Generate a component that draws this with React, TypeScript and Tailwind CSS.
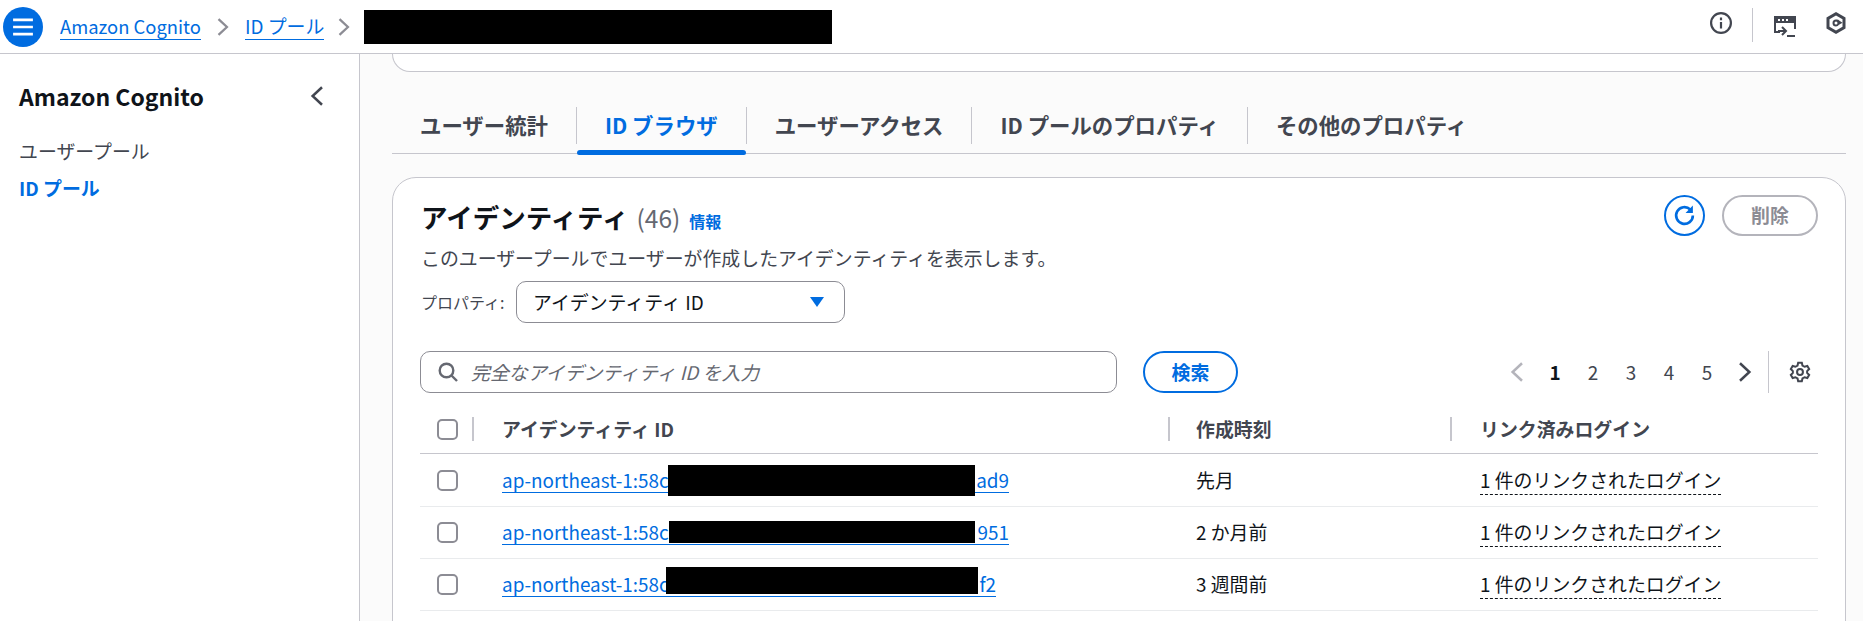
const rows = [
  { suffix: "ad9", time: "先月", height: "h-[53px]", linkWidth: "w-[507px]", mask: "left-[166px] w-[307px] top-[-3px] h-[31px]" },
  { suffix: "951", time: "2 か月前", height: "h-[52px]", linkWidth: "w-[507px]", mask: "left-[167px] w-[306px] top-[1px] h-[22px]" },
  { suffix: "f2", time: "3 週間前", height: "h-[52px]", linkWidth: "w-[494px]", mask: "left-[164px] w-[312px] top-[-5px] h-[27px]" },
];

const tabs = ["ユーザー統計", "ID ブラウザ", "ユーザーアクセス", "ID プールのプロパティ", "その他のプロパティ"];

function Chevron({ dir, className }: { dir: "left" | "right"; className: string }) {
  return (
    <svg viewBox="0 0 16 16" className={className} fill="none" stroke="currentColor" strokeWidth="2">
      <path d={dir === "right" ? "M4 1l7.500 7-7.500 7" : "M12 1L4.500 8l7.500 7"} />
    </svg>
  );
}

function Checkbox() {
  return <div className="h-[21px] w-[21px] rounded-[5px] border-2 border-[#8c8c94] bg-white" />;
}

function HeadCell({ label, pad }: { label: string; pad: string }) {
  return (
    <div className={`flex h-[24px] items-center border-l-2 border-[#c6c6cd] font-bold text-[#424650] ${pad}`}>{label}</div>
  );
}

export default function App() {
  return (
    <div className="flex h-[621px] w-[1863px] flex-col overflow-hidden bg-white text-[18.9px] text-[#0f141a] font-['Noto_Sans_CJK_JP','Noto_Sans',sans-serif]">
      <header className="flex h-[54px] shrink-0 items-center border-b border-[#c6c6cd] bg-white pl-[3px] pr-[17px]">
        <button className="flex h-10 w-10 items-center justify-center rounded-full bg-[#006ce0]">
          <svg viewBox="0 0 20 20" className="h-[22px] w-[22px]" fill="none" stroke="white" strokeWidth="2.4">
            <path d="M1 3.500h18M1 10h18M1 16.500h18" />
          </svg>
        </button>
        <nav className="ml-[17px] flex items-center">
          <a className="border-b border-[#006ce0] text-[18.4px] leading-[26px] text-[#006ce0]">Amazon Cognito</a>
          <Chevron dir="right" className="mx-[13px] h-[18px] w-[18px] text-[#8c8c94]" />
          <a className="border-b border-[#006ce0] leading-[26px] text-[#006ce0]">ID プール</a>
          <Chevron dir="right" className="mx-[11px] h-[18px] w-[18px] text-[#8c8c94]" />
          <div className="h-[34px] w-[468px] bg-black" />
        </nav>
        <div className="ml-auto flex items-start self-start">
          <svg viewBox="0 0 20 20" className="mt-[12px] h-[22px] w-[22px] text-[#424650]" fill="none" stroke="currentColor" strokeWidth="2">
            <circle cx="10" cy="10" r="9" />
            <path d="M10 9v6M10 5v2.400" />
          </svg>
          <div className="ml-[20px] mt-[8px] h-[34px] w-px bg-[#c6c6cd]" />
          <svg viewBox="0 0 22 22" className="ml-[21px] mt-[16px] h-[22px] w-[22px] text-[#424650]" fill="none" stroke="currentColor" strokeWidth="2">
            <path d="M6 16H1V1h20v12" />
            <path d="M0 0h22v7H0z" fill="currentColor" stroke="none" />
            <path d="M4 3h2v2H4zM8 3h2v2H8zM12 3h2v2h-2z" fill="white" stroke="none" />
            <path d="M4 15h8M8 11l4 4-4 4M13 20h8" />
          </svg>
          <svg viewBox="0 0 20 22" className="ml-[30px] mt-[12px] h-[22px] w-[20px] text-[#424650]">
            <path d="M10 0l9.500 5.500v11L10 22 .500 16.500v-11z" fill="currentColor" />
            <path d="M10 3.500l6.500 3.700v7.600L10 18.500l-6.500-3.700V7.200z" fill="white" />
            <path d="M10 7.500a3.500 3.500 0 1 0 0 7 3.500 3.500 0 0 0 3-1.700l3.500-2-3-2A3.500 3.500 0 0 0 10 7.500z" fill="currentColor" />
            <circle cx="10" cy="11" r="1.500" fill="white" />
          </svg>
        </div>
      </header>

      <div className="flex min-h-0 flex-1">
        <aside className="w-[360px] shrink-0 border-r border-[#c6c6cd] bg-white pl-[19px] pr-[32px] pt-[28px]">
          <div className="flex items-center justify-between">
            <h2 className="text-[23px] font-bold leading-[28px]">Amazon Cognito</h2>
            <Chevron dir="left" className="h-[20px] w-[20px] text-[#424650]" />
          </div>
          <ul className="mt-[28px] flex flex-col gap-[11px] leading-[26px]">
            <li className="text-[#424650]">ユーザープール</li>
            <li className="font-bold text-[#006ce0]">ID プール</li>
          </ul>
        </aside>

        <main className="min-w-0 flex-1 bg-[#fbfbfb] pl-[32px] pr-[17px]">
          <div className="h-[18px] rounded-b-[22px] border-x border-b border-[#c6c6cd] bg-white" />

          <div className="mt-[34px] flex h-[48px] items-start border-b border-[#c6c6cd]">
            {tabs.map((tab, i) => (
              <div key={tab} className="flex items-start">
                {i > 0 && <div className="mt-px h-[37px] w-px bg-[#c6c6cd]" />}
                <div className="relative h-[48px] px-7 pt-[4px]">
                  <span className={`text-[21.4px] font-bold leading-[30px] ${i === 1 ? "text-[#006ce0]" : "text-[#424650]"}`}>{tab}</span>
                  {i === 1 && <div className="absolute inset-x-0 bottom-[-1px] h-[5px] rounded-t-[3px] rounded-b-[2px] bg-[#006ce0]" />}
                </div>
              </div>
            ))}
          </div>

          <section className="mt-[23px] h-[600px] rounded-[24px] border border-[#c6c6cd] bg-white px-[27px] pt-[17px]">
            <div className="flex items-start justify-between">
              <div className="ml-px flex items-baseline">
                <h1 className="text-[26.5px] font-bold leading-[44px]">アイデンティティ</h1>
                <span className="ml-[8px] text-[24.5px] text-[#656871]">(46)</span>
                <a className="ml-[9px] text-[16px] font-bold text-[#006ce0]">情報</a>
              </div>
              <div className="flex items-center gap-[17px]">
                <button className="flex h-[41px] w-[41px] items-center justify-center rounded-full border-2 border-[#006ce0]">
                  <svg viewBox="0 0 22 22" className="h-[23px] w-[23px] text-[#006ce0]" fill="none" stroke="currentColor" strokeWidth="2.500">
                    <path d="M19 11a8 8 0 1 1-2.500-5.800" />
                    <path d="M19 1.500v7h-7z" fill="currentColor" stroke="none" />
                  </svg>
                </button>
                <button className="h-[41px] w-[96px] rounded-full border-2 border-[#b4b4bb] font-bold text-[#8c8c94]">削除</button>
              </div>
            </div>
            <p className="ml-px mt-[6px] leading-[26px] text-[#424650]">このユーザープールでユーザーが作成したアイデンティティを表示します。</p>
            <div className="ml-px mt-[10px] flex items-center">
              <span className="w-[95px] text-[16px] text-[#424650]">プロパティ:</span>
              <div className="flex h-[42px] w-[329px] items-center justify-between rounded-[10px] border border-[#8c8c94] pl-[16px] pr-[19px]">
                <span>アイデンティティ ID</span>
                <svg viewBox="0 0 16 10" className="h-[10px] w-[16px] text-[#006ce0]" fill="currentColor">
                  <path d="M1 0h14L8 10z" />
                </svg>
              </div>
            </div>

            <div className="mt-[28px] flex items-center">
              <div className="flex h-[42px] w-[697px] items-center rounded-[10px] border border-[#8c8c94] pl-[17px]">
                <svg viewBox="0 0 20 20" className="h-[20px] w-[20px] text-[#656871]" fill="none" stroke="currentColor" strokeWidth="2.400">
                  <circle cx="8.500" cy="8.500" r="6.800" />
                  <path d="M13.500 13.500l5.500 5.500" />
                </svg>
                <span className="ml-[13px] italic text-[#656871]">完全なアイデンティティ ID を入力</span>
              </div>
              <button className="ml-[26px] h-[42px] w-[95px] rounded-full border-2 border-[#006ce0] font-bold text-[#006ce0]">検索</button>
              <div className="ml-auto flex items-center">
                <div className="flex w-[38px] justify-center">
                  <Chevron dir="left" className="h-[20px] w-[20px] text-[#b4b4bb]" />
                </div>
                <span className="w-[38px] text-center font-bold text-[#0f141a]">1</span>
                {[2, 3, 4, 5].map((n) => (
                  <span key={n} className="w-[38px] text-center text-[#424650]">{n}</span>
                ))}
                <div className="flex w-[38px] justify-center">
                  <Chevron dir="right" className="h-[20px] w-[20px] text-[#424650]" />
                </div>
                <div className="ml-[4px] h-[42px] w-px bg-[#c6c6cd]" />
                <svg viewBox="0 0 24 24" className="ml-[20px] mr-[7px] h-[22px] w-[22px] text-[#424650]" fill="none" stroke="currentColor" strokeWidth="2.200">
                  <circle cx="12" cy="12" r="3.200" />
                  <path d="M10 2h4l.7 3 2.300 1.300 3-.9 2 3.400-2.200 2.200v2l2.200 2.200-2 3.400-3-.9-2.300 1.300-.7 3h-4l-.7-3L7 17.700l-3 .9-2-3.400L4.200 13v-2L2 8.800l2-3.400 3 .9L9.300 5z" />
                </svg>
              </div>
            </div>

            <div className="mt-[10px] grid h-[51px] grid-cols-[52px_696px_282px_1fr] items-center border-b border-[#c6c6cd] pt-[2px]">
              <div className="pl-[17px]">
                <Checkbox />
              </div>
              <HeadCell label="アイデンティティ ID" pad="pl-[28px]" />
              <HeadCell label="作成時刻" pad="pl-[26px]" />
              <HeadCell label="リンク済みログイン" pad="pl-[28px]" />
            </div>

            {rows.map((row) => (
              <div key={row.suffix} className={`grid ${row.height} grid-cols-[52px_696px_282px_1fr] items-center border-b border-[#e9ebed]`}>
                <div className="pl-[17px]">
                  <Checkbox />
                </div>
                <div className="pl-[30px]">
                  <a className={`relative flex ${row.linkWidth} justify-between border-b border-[#006ce0] text-[18.9px] leading-[24px] text-[#006ce0]`}>
                    <span>ap-northeast-1:58c</span>
                    <span>{row.suffix}</span>
                    <span className={`absolute bg-black ${row.mask}`} />
                  </a>
                </div>
                <div className="pl-7">{row.time}</div>
                <div className="pl-[30px]">
                  <span className="border-b border-dashed border-[#0f141a] pb-px leading-[24px]">1 件のリンクされたログイン</span>
                </div>
              </div>
            ))}
          </section>
        </main>
      </div>
    </div>
  );
}
